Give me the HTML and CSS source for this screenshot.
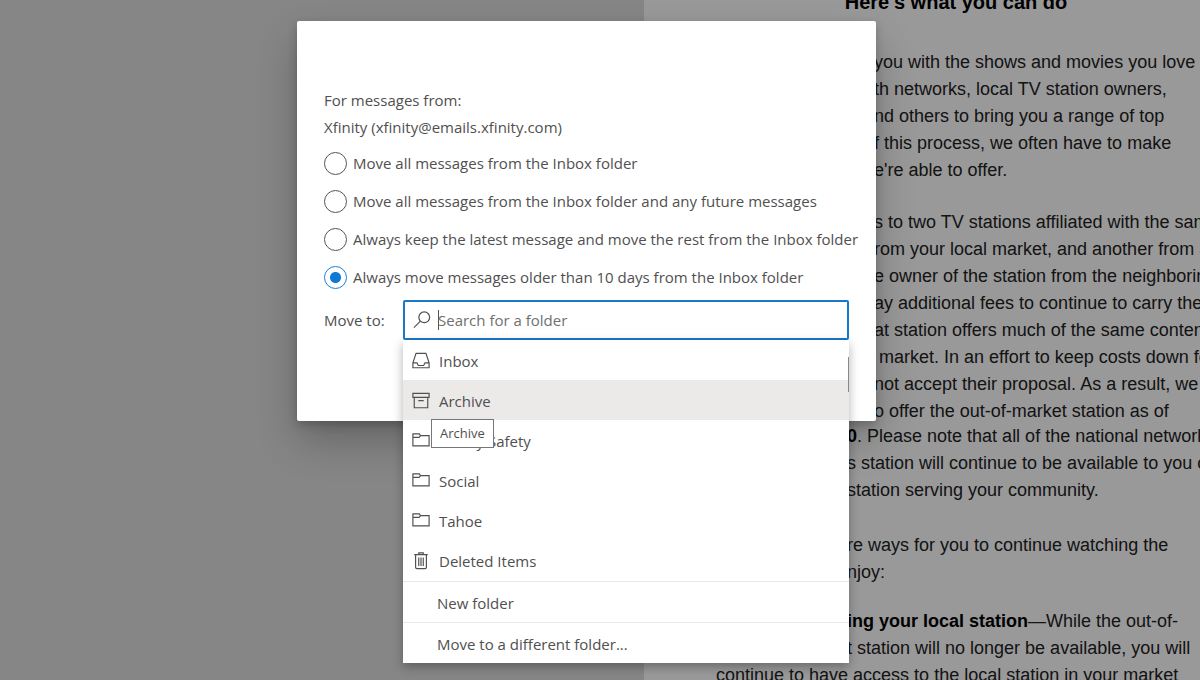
FILE: index.html
```html
<!DOCTYPE html>
<html lang="en">
<head>
<meta charset="utf-8">
<title>Sweep messages</title>
<link rel="stylesheet" href="styles.css">
</head>
<body>
<svg class="sprite" aria-hidden="true">
  <symbol id="folder" viewBox="0 0 20 20"><path d="M1 2h7l1.500 2H19v11.500H1zM1 6h7l1.500-2"/></symbol>
</svg>
<div class="app">
  <article class="message">
    <h2 class="message-title">Here's what you can do</h2>
    <p class="inset">you with the shows and movies you love and<br>th networks, local TV station owners,<br>nd others to bring you a range of top<br>f this process, we often have to make<br>e're able to offer.</p>
    <p class="inset">s to two TV stations affiliated with the same<br>rom your local market, and another from a<br>e owner of the station from the neighboring<br>ay additional fees to continue to carry the<br>at station offers much of the same content<br>&nbsp;market. In an effort to keep costs down for<br>not accept their proposal. As a result, we<br>o offer the out-of-market station as of</p>
    <p class="outset"><b>0</b>. Please note that all of the national networks<br>s station will continue to be available to you on<br>station serving your community.</p>
    <p class="outset spaced">re ways for you to continue watching the<br>njoy:</p>
    <p class="outset tight"><b>ing your local station</b>—While the out-of-<br>t station will no longer be available, you will</p>
    <p>continue to have access to the local station in your market</p>
  </article>
</div>
<div class="overlay">
  <form class="dialog" role="dialog" aria-label="Sweep">
    <p class="line">For messages from:</p>
    <p class="line">Xfinity (xfinity@emails.xfinity.com)</p>
    <div class="choices">
      <label class="choice"><input type="radio" name="rule">Move all messages from the Inbox folder</label>
      <label class="choice"><input type="radio" name="rule">Move all messages from the Inbox folder and any future messages</label>
      <label class="choice"><input type="radio" name="rule">Always keep the latest message and move the rest from the Inbox folder</label>
      <label class="choice"><input type="radio" name="rule" checked>Always move messages older than 10 days from the Inbox folder</label>
    </div>
    <div class="target">
      <label for="folder-search">Move to:</label>
      <div class="combo">
        <div class="search">
          <svg class="icon" viewBox="0 0 20 20"><circle cx="12.500" cy="7" r="6"/><path d="M8.200 11.300L1 18.500"/></svg>
          <span class="caret"></span>
          <input id="folder-search" type="text" placeholder="Search for a folder">
        </div>
        <div class="menu">
          <div class="folders">
            <button type="button" class="item"><svg class="icon" viewBox="0 0 20 20"><path d="M4.500 1.500h11L19 12v5.500H1V12zM1 12h4.500l1.500 3h6L14.500 12H19"/></svg>Inbox</button>
            <button type="button" class="item active"><svg class="icon" viewBox="0 0 20 20"><path d="M1 1.500h18V6H1zM2.500 6h15v11.500h-15zM7 9.500h6"/></svg>Archive<span class="tooltip" role="tooltip">Archive</span></button>
            <button type="button" class="item"><svg class="icon"><use href="#folder"/></svg>Family Safety</button>
            <button type="button" class="item"><svg class="icon"><use href="#folder"/></svg>Social</button>
            <button type="button" class="item"><svg class="icon"><use href="#folder"/></svg>Tahoe</button>
            <button type="button" class="item"><svg class="icon" viewBox="0 0 20 20"><path d="M2.500 3h15M7.500 3V1h5v2M4 3v14q0 1.500 1.500 1.500h9q1.500 0 1.500-1.500V3M7.500 6v9.500M10 6v9.500M12.500 6v9.500"/></svg>Deleted Items</button>
            <span class="thumb"></span>
          </div>
          <button type="button" class="command">New folder</button>
          <button type="button" class="command">Move to a different folder...</button>
        </div>
      </div>
    </div>
  </form>
</div>
</body>
</html>
```
FILE: styles.css
```css
* { box-sizing: border-box; }
body {
  margin: 0;
  height: 100vh;
  overflow: hidden;
  position: relative;
  font-family: "Segoe UI", "Open Sans", "Noto Sans", sans-serif;
  font-size: 15px;
  color: #505050;
}
p, h2 { margin: 0; }
.sprite { display: none; }

.app {
  height: 100%;
  display: grid;
  grid-template-columns: 644px 1fr;
  background: #e0e0e0;
  overflow: hidden;
}
.message {
  grid-column: 2;
  background: #fff;
  color: #222;
  padding-left: 72px;
  overflow: hidden;
  white-space: nowrap;
  font: 18px/27px "Liberation Sans", Arial, sans-serif;
}
.message b, .message-title { color: #000; }
.message-title {
  width: 480px;
  margin-top: -11px;
  margin-bottom: 33px;
  text-align: center;
  font-size: 20px;
  line-height: 27px;
}
.inset { padding-left: 158px; margin-bottom: 25px; }
.inset + .outset { margin-top: -27px; }
.outset { padding-left: 131px; }
.spaced { margin-top: 28px; }
.tight { margin-top: 22px; }

.overlay {
  position: absolute;
  inset: 0;
  padding: 21px 324px 0 297px;
  background: rgba(0, 0, 0, 0.4);
}
.dialog {
  padding: 66px 27px 81px;
  background: #fff;
  border-radius: 2px;
  box-shadow: 0 20px 40px rgba(0, 0, 0, 0.24), 0 4px 10px rgba(0, 0, 0, 0.2);
}
.line { line-height: 27px; }
.choices { display: grid; padding: 3px 0 4px; }
.choice {
  height: 38px;
  display: flex;
  align-items: center;
  gap: 6px;
  white-space: nowrap;
}
.choice input {
  appearance: none;
  flex: none;
  width: 23px;
  height: 23px;
  margin: 0;
  border: 1px solid #555;
  border-radius: 50%;
}
.choice input:checked {
  border-color: #1a80d4;
  background: radial-gradient(circle, #0f78d4 5px, transparent 6px);
}
.target { display: flex; align-items: center; }
.target > label { width: 79px; }
.combo { flex: 1; position: relative; }
.search {
  height: 40px;
  padding-left: 8px;
  display: flex;
  align-items: center;
  gap: 7px;
  border: 2px solid #1a78c8;
  border-radius: 2px;
}
.icon {
  flex: none;
  width: 18px;
  height: 18px;
  fill: none;
  stroke: #505050;
  stroke-width: 1.3;
}
.caret { width: 1px; height: 20px; margin-right: -8px; background: #555; }
.search input {
  flex: 1;
  min-width: 0;
  padding: 0;
  border: 0;
  outline: 0;
  background: none;
  font: inherit;
}
.search input::placeholder { color: #707070; }

.menu {
  position: absolute;
  top: 100%;
  left: 0;
  right: 0;
  background: #fff;
  box-shadow: 0 4px 10px rgba(0, 0, 0, 0.3);
}
.folders { position: relative; padding-bottom: 1px; }
.item, .command {
  position: relative;
  display: flex;
  align-items: center;
  width: 100%;
  height: 40px;
  border: 0;
  background: none;
  color: inherit;
  font: inherit;
  text-align: left;
}
.item { padding: 1px 9px 0; gap: 9px; }
.active { background: #ebeae9; z-index: 1; }
.command { height: 41px; padding: 1px 34px 0; border-top: 1px solid #e8e8e8; }
.thumb {
  position: absolute;
  top: 17px;
  right: 0;
  width: 1px;
  height: 35px;
  background: #888;
  z-index: 2;
}
.tooltip {
  position: absolute;
  top: 39px;
  left: 28px;
  padding: 4px 8px;
  border: 1px solid #777;
  background: #fff;
  font-size: 13px;
  line-height: 19px;
}
```
